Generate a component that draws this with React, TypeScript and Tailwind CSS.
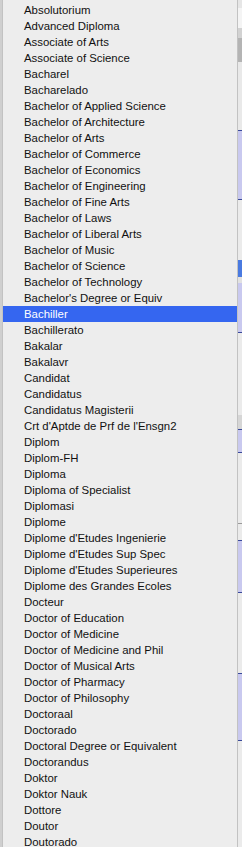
const ITEMS = [
  "Absolutorium",
  "Advanced Diploma",
  "Associate of Arts",
  "Associate of Science",
  "Bacharel",
  "Bacharelado",
  "Bachelor of Applied Science",
  "Bachelor of Architecture",
  "Bachelor of Arts",
  "Bachelor of Commerce",
  "Bachelor of Economics",
  "Bachelor of Engineering",
  "Bachelor of Fine Arts",
  "Bachelor of Laws",
  "Bachelor of Liberal Arts",
  "Bachelor of Music",
  "Bachelor of Science",
  "Bachelor of Technology",
  "Bachelor's Degree or Equiv",
  "Bachiller",
  "Bachillerato",
  "Bakalar",
  "Bakalavr",
  "Candidat",
  "Candidatus",
  "Candidatus Magisterii",
  "Crt d'Aptde de Prf de l'Ensgn2",
  "Diplom",
  "Diplom-FH",
  "Diploma",
  "Diploma of Specialist",
  "Diplomasi",
  "Diplome",
  "Diplome d'Etudes Ingenierie",
  "Diplome d'Etudes Sup Spec",
  "Diplome d'Etudes Superieures",
  "Diplome des Grandes Ecoles",
  "Docteur",
  "Doctor of Education",
  "Doctor of Medicine",
  "Doctor of Medicine and Phil",
  "Doctor of Musical Arts",
  "Doctor of Pharmacy",
  "Doctor of Philosophy",
  "Doctoraal",
  "Doctorado",
  "Doctoral Degree or Equivalent",
  "Doctorandus",
  "Doktor",
  "Doktor Nauk",
  "Dottore",
  "Doutor",
  "Doutorado",
];

const SELECTED = "Bachiller";

// the page peeking out to the right of the menu
function BackdropStrip() {
  return (
    <div className="flex w-[4px] shrink-0 flex-col">
      <div className="h-[8px] bg-[#e6e6e6]" />
      <div className="h-[20px] bg-[#f4f4f4]" />
      <div className="h-[10px] bg-[#d2d2d2]" />
      <div className="h-[24px] bg-[#b4b4b4]" />
      <div className="h-[68px] bg-[#e9e9e9]" />
      <div className="h-[70px] border-y border-[#3a4a9a] bg-[#c9c9ef]" />
      <div className="h-[60px] bg-[#ebebeb]" />
      <div className="h-[17px] bg-[#4a7ae0]" />
      <div className="h-[6px] bg-[#e2e2e2]" />
      <div className="h-[50px] border-b border-[#3a4a9a] bg-[#c9c9ef]" />
      <div className="h-[82px] bg-[#ebebeb]" />
      <div className="h-[14px] bg-[#d6d6d6]" />
      <div className="h-[24px] border-y border-[#3a4a9a] bg-[#c9c9ef]" />
      <div className="h-[70px] bg-[#ebebeb]" />
      <div className="h-[1px] bg-[#9a9a9a]" />
      <div className="h-[16px] bg-[#ebebeb]" />
      <div className="h-[53px] border-y border-[#3a4a9a] bg-[#c9c9ef]" />
      <div className="h-[80px] bg-[#ebebeb]" />
      <div className="h-[68px] border-y border-[#3a4a9a] bg-[#c9c9ef]" />
      <div className="flex-1 bg-[#ebebeb]" />
    </div>
  );
}

export default function App() {
  return (
    <div className="flex h-[847px] w-[242px] overflow-hidden bg-[#d0d0d0]">
      <div className="w-[2px] shrink-0 bg-[#cfcfcf]" />
      <div
        className="flex w-[236px] shrink-0 flex-col border-x border-[#c2c2c2] bg-[#ededed] pt-[2px]"
        style={{ fontFamily: '"Liberation Sans", Arial, sans-serif' }}
      >
        {ITEMS.map((item) => (
          <div
            key={item}
            className={
              item === SELECTED
                ? "h-[16px] shrink-0 bg-[#3566f0] pl-[21px] text-[11.4px] leading-[16px] whitespace-nowrap text-white"
                : "h-[16px] shrink-0 pl-[21px] text-[11.4px] leading-[16px] whitespace-nowrap text-[#111111]"
            }
          >
            {item}
          </div>
        ))}
      </div>
      <BackdropStrip />
    </div>
  );
}
